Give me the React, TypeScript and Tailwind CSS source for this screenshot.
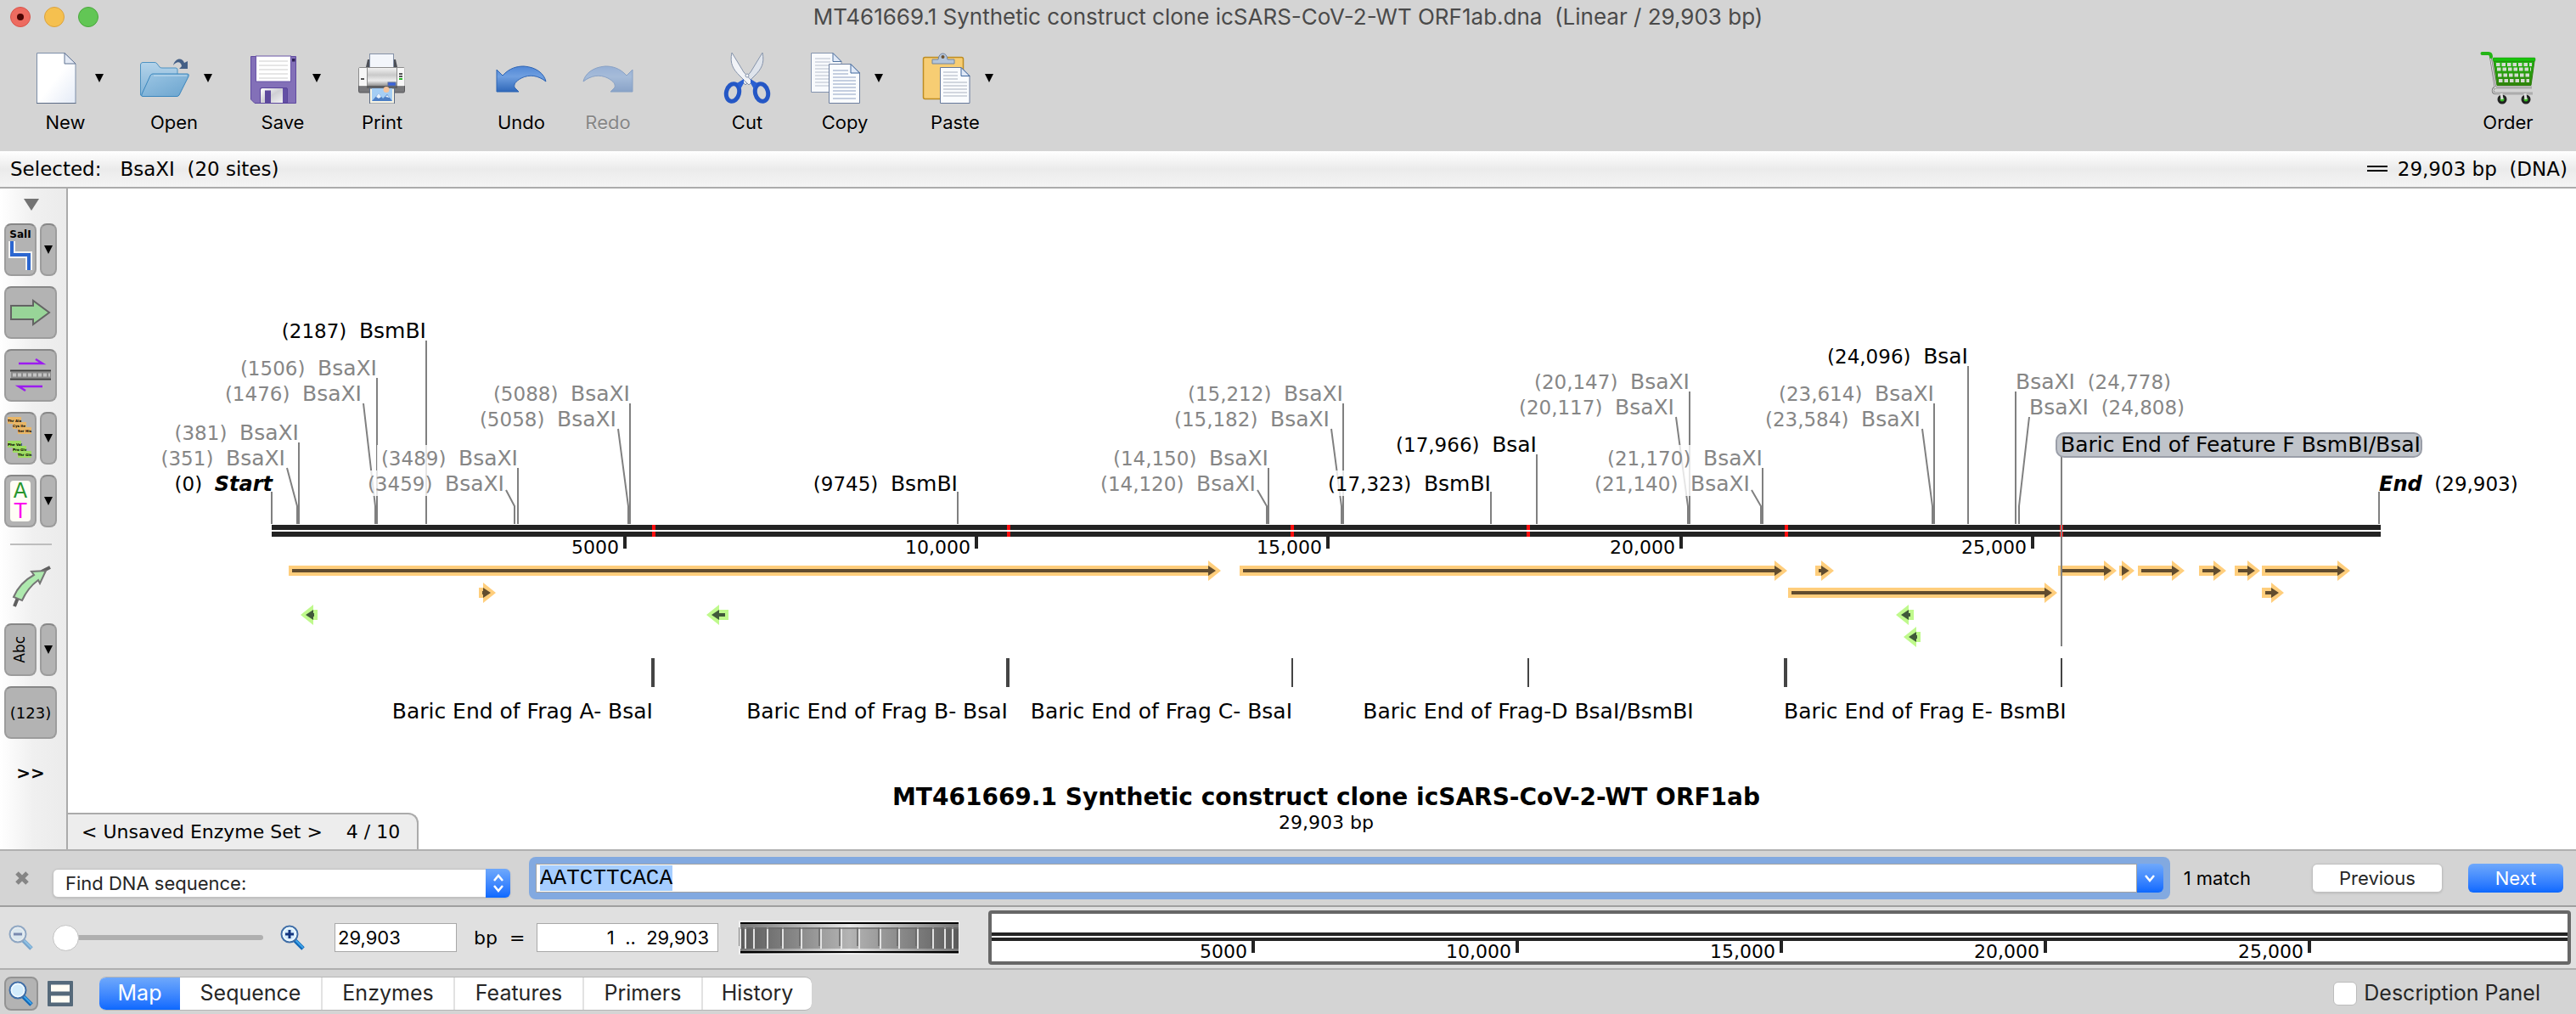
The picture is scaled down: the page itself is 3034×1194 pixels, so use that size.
import React, { useEffect, useRef, useState } from 'react';
import clsx from 'clsx';

type Site = {
  pos: string;
  name: string;
  x: number; // where the leader meets the strand
  y: number; // baseline of the label
  from?: number; // top of a slanted leader
  left?: boolean; // label starts at the leader
  unique?: boolean;
  veil?: number; // width of the veil that keeps the label readable
};

const SITES: Site[] = [
  { pos: '(2187)', name: 'BsmBI', x: 502, y: 398, unique: true },
  { pos: '(1506)', name: 'BsaXI', x: 444, y: 442 },
  { pos: '(1476)', name: 'BsaXI', x: 442, y: 472, from: 428 },
  { pos: '(381)', name: 'BsaXI', x: 352, y: 518 },
  { pos: '(351)', name: 'BsaXI', x: 350, y: 548, from: 338 },
  { pos: '(5088)', name: 'BsaXI', x: 742, y: 472 },
  { pos: '(5058)', name: 'BsaXI', x: 740, y: 502, from: 728 },
  { pos: '(3489)', name: 'BsaXI', x: 610, y: 548, veil: 165 },
  { pos: '(3459)', name: 'BsaXI', x: 606, y: 578, from: 596, veil: 160 },
  { pos: '(9745)', name: 'BsmBI', x: 1128, y: 578, unique: true },
  { pos: '(14,150)', name: 'BsaXI', x: 1494, y: 548 },
  { pos: '(14,120)', name: 'BsaXI', x: 1492, y: 578, from: 1481 },
  { pos: '(15,212)', name: 'BsaXI', x: 1582, y: 472 },
  { pos: '(15,182)', name: 'BsaXI', x: 1580, y: 502, from: 1568 },
  { pos: '(17,966)', name: 'BsaI', x: 1810, y: 532, unique: true },
  { pos: '(17,323)', name: 'BsmBI', x: 1756, y: 578, unique: true, veil: 192 },
  { pos: '(20,147)', name: 'BsaXI', x: 1990, y: 458 },
  { pos: '(20,117)', name: 'BsaXI', x: 1988, y: 488, from: 1974 },
  { pos: '(21,170)', name: 'BsaXI', x: 2076, y: 548, veil: 183 },
  { pos: '(21,140)', name: 'BsaXI', x: 2074, y: 578, from: 2063, veil: 183 },
  { pos: '(24,096)', name: 'BsaI', x: 2318, y: 428, unique: true },
  { pos: '(23,614)', name: 'BsaXI', x: 2278, y: 472 },
  { pos: '(23,584)', name: 'BsaXI', x: 2276, y: 502, from: 2264 },
  { pos: '(24,778)', name: 'BsaXI', x: 2374, y: 458, left: true },
  { pos: '(24,808)', name: 'BsaXI', x: 2378, y: 488, from: 2390, left: true },
];

const FEATURES: { from: number; to: number; y: number; reverse?: boolean }[] = [
  { from: 340, to: 1438, y: 672 },
  { from: 1460, to: 2105, y: 672 },
  { from: 2138, to: 2160, y: 672 },
  { from: 2424, to: 2493, y: 672 },
  { from: 2496, to: 2514, y: 672 },
  { from: 2518, to: 2573, y: 672 },
  { from: 2590, to: 2622, y: 672 },
  { from: 2632, to: 2662, y: 672 },
  { from: 2664, to: 2768, y: 672 },
  { from: 564, to: 584, y: 698 },
  { from: 2106, to: 2423, y: 698 },
  { from: 2664, to: 2690, y: 698 },
  { from: 374, to: 354, y: 724, reverse: true },
  { from: 858, to: 832, y: 724, reverse: true },
  { from: 2254, to: 2233, y: 724, reverse: true },
  { from: 2262, to: 2242, y: 750, reverse: true },
];

const FRAGMENTS = [
  { label: 'Baric End of Frag A- BsaI', x: 769, w: 4, at: 769, anchor: 'end' },
  { label: 'Baric End of Frag B- BsaI', x: 1187, w: 4, at: 1187, anchor: 'end' },
  { label: 'Baric End of Frag C- BsaI', x: 1522, w: 2, at: 1522, anchor: 'end' },
  { label: 'Baric End of Frag-D BsaI/BsmBI', x: 1800, w: 2, at: 1800, anchor: 'middle' },
  { label: 'Baric End of Frag E- BsmBI', x: 2103, w: 4, at: 2101, anchor: 'start' },
] as const;

const TICKS = [
  { label: '5000', x: 736 },
  { label: '10,000', x: 1150 },
  { label: '15,000', x: 1564 },
  { label: '20,000', x: 1980 },
  { label: '25,000', x: 2394 },
];

const TABS = [
  { name: 'Map', width: 'w-[95px]' },
  { name: 'Sequence', width: 'w-[166px]' },
  { name: 'Enzymes', width: 'w-[156px]' },
  { name: 'Features', width: 'w-[152px]' },
  { name: 'Primers', width: 'w-[140px]' },
  { name: 'History', width: 'w-[130px]' },
];

const SANS = "font-['Inter',sans-serif]";
const WIDE = "font-['DejaVu_Sans',sans-serif]";
const BLUE = 'bg-gradient-to-b from-[#6ea8fb] to-[#0a68ff]';

const Caret = () => (
  <svg width="10" height="10" viewBox="0 0 10 10" aria-hidden="true">
    <path d="M0 0H10L5 10Z" fill="#000" />
  </svg>
);

/* ---------- toolbar icons ---------- */

const NewIcon = () => (
  <svg width="60" height="60" viewBox="0 0 60 60">
    <defs>
      <linearGradient id="page" x1="0" y1="0" x2="1" y2="1">
        <stop offset="0.5" stopColor="#fff" />
        <stop offset="1" stopColor="#e4ebf7" />
      </linearGradient>
    </defs>
    <path d="M7.5 .5H40L53 13V59.5H7.5Z" fill="url(#page)" stroke="#7d8ea8" />
    <path d="M7 59.5H53.5" stroke="#5c6c86" />
    <path d="M40 .5V13H53Z" fill="#e3e9f4" stroke="#5f7292" strokeLinejoin="round" />
  </svg>
);

const OpenIcon = () => (
  <svg width="60" height="60" viewBox="0 0 60 60">
    <defs>
      <linearGradient id="back" x1="0" y1="0" x2="0" y2="1">
        <stop offset="0" stopColor="#b4d3ea" />
        <stop offset="1" stopColor="#7fb2d6" />
      </linearGradient>
      <linearGradient id="front" x1="0" y1="0" x2="1" y2="1">
        <stop offset="0" stopColor="#9cc6e4" />
        <stop offset="1" stopColor="#6ba4ce" />
      </linearGradient>
    </defs>
    <path d="M1.500 50V14Q2 11.500 4 11.500H18Q20 11.500 21 13L24 17Q25 18 27 18H43Q45 18 45 20V30L20 51H3Z" fill="url(#back)" stroke="#4d92c2" />
    <path d="M16 25H57Q59 25 58 28L47 50Q46 51.500 44 51.500H4Q2 51.500 3 49L13 27Q14 25 16 25Z" fill="url(#front)" stroke="#3a86bd" />
    <path d="M17 27H56" stroke="#c7e0f1" />
    <path d="M40 15C42 6 51 5 53 12L57 10V19H47L50 16C49 10 44 10 40 15Z" fill="#445f86" />
  </svg>
);

const SaveIcon = () => (
  <svg width="60" height="60" viewBox="0 0 60 60">
    <defs>
      <linearGradient id="metal" x1="0" y1="0" x2="1" y2="1">
        <stop offset="0" stopColor="#fff" />
        <stop offset="0.5" stopColor="#cfcfd4" />
        <stop offset="1" stopColor="#f2f2f4" />
      </linearGradient>
    </defs>
    <path d="M3.500 4.500H56.500V59.500H8L3.500 55Z" fill="#8370b8" stroke="#5f4aa0" />
    <rect x="9.500" y="4" width="41" height="30" fill="#fff" stroke="#6a56a8" />
    <path d="M13 10H47M13 15H47M13 20H47M13 25H47M13 30H47" stroke="#cdcdcd" />
    <rect x="52" y="7" width="3.500" height="3.500" fill="#2d1f55" />
    <path d="M14.500 59V43Q14.500 41.500 16 41.500H45Q46.500 41.500 46.500 43V59Z" fill="#6450a5" stroke="#5a459b" />
    <path d="M15 59V44Q15 42 17 42H41V59Z" fill="url(#metal)" />
    <rect x="20" y="44.500" width="7" height="14.500" fill="#5d499c" />
  </svg>
);

const PrintIcon = () => (
  <svg width="60" height="60" viewBox="0 0 60 60">
    <defs>
      <linearGradient id="body" x1="0" y1="0" x2="0" y2="1">
        <stop offset="0" stopColor="#f4f4f4" />
        <stop offset="0.4" stopColor="#c9c9c9" />
        <stop offset="0.7" stopColor="#ededed" />
        <stop offset="1" stopColor="#8b8b8b" />
      </linearGradient>
    </defs>
    <path d="M11 17L13 8H16V17ZM48 17L46 8H43V17Z" fill="#4c4f56" />
    <rect x="15.500" y="1.500" width="28" height="16" fill="#f3f6fb" stroke="#8592a8" />
    <rect x="2.500" y="36" width="54" height="11" rx="1.500" fill="#77777a" stroke="#57575a" />
    <rect x="2.500" y="17.500" width="54" height="22" rx="1.500" fill="url(#body)" stroke="#8d8d8d" />
    <rect x="3" y="18" width="9" height="21" fill="#f7f7f7" />
    <rect x="48" y="18" width="8.500" height="21" fill="#f7f7f7" />
    <path d="M12.500 18V40M47.500 18V40" stroke="#8f8f8f" />
    <path d="M5 31H9M50 25H54M50 28H54" stroke="#555" strokeWidth="2" />
    <path d="M50 31H54" stroke="#28b728" strokeWidth="2" />
    <rect x="12" y="39" width="36" height="3" fill="#5e5e60" />
    <rect x="37" y="35" width="9" height="4" fill="#3b63dc" stroke="#5b6f9a" />
    <rect x="15.500" y="42" width="29" height="18" fill="#f7f4e4" stroke="#5d6c84" />
    <rect x="18" y="42" width="24" height="15" fill="#a5cef4" />
    <circle cx="35" cy="43.500" r="3.500" fill="#f6c49c" />
    <path d="M18 57L26 48L31 54L36 49L42 57Z" fill="#4d7fc5" />
    <path d="M23 52L26 48L29 52L26 54ZM34 52L36 50L39 53Z" fill="#e9f2fc" />
  </svg>
);

const TurnIcon = ({ flip }: { flip?: boolean }) => (
  <svg width="60" height="60" viewBox="0 0 60 60" className={flip ? '-scale-x-100 opacity-45' : ''}>
    <defs>
      <linearGradient id={flip ? 'redo' : 'undo'} x1="0" y1="0" x2="0" y2="1">
        <stop offset="0" stopColor="#4f86d6" />
        <stop offset="0.4" stopColor="#6f9fe0" />
        <stop offset="1" stopColor="#2f68b9" />
      </linearGradient>
    </defs>
    <path
      d="M1 20L8 27C16 18 25 16 33 16C48 17 57 25 59 34C50 27 40 25 30 30C23 34 21 37 22 41L27 46H1Z"
      fill={flip ? 'url(#redo)' : 'url(#undo)'}
      stroke="#2d64b4"
    />
  </svg>
);

const CutIcon = () => (
  <svg width="60" height="60" viewBox="0 0 60 60">
    <path d="M48 0C51 13 46 20 39 27L28 38L24 34L34 23Z" fill="#dfe4ec" stroke="#8593aa" />
    <path d="M12 0C9 13 14 20 21 27L32 38L36 34L26 23Z" fill="#f1f3f7" stroke="#8593aa" />
    <ellipse cx="13" cy="47" rx="7.500" ry="10.500" fill="none" stroke="#2457c5" strokeWidth="5" transform="rotate(14 13 47)" />
    <ellipse cx="47" cy="47" rx="7.500" ry="10.500" fill="none" stroke="#2457c5" strokeWidth="5" transform="rotate(-14 47 47)" />
    <path d="M18 36L26 31V36L22 43ZM42 36L34 31V36L38 43Z" fill="#2a60d2" />
    <circle cx="30" cy="27" r="2" fill="#fff" stroke="#8593aa" />
  </svg>
);

const CopyIcon = () => (
  <svg width="60" height="60" viewBox="0 0 60 60">
    <path d="M1.500 .5H27L37 10.500V46.500H1.500Z" fill="#f8fafd" stroke="#8494ae" />
    <path d="M27 .5V10.500H37Z" fill="#dfe8f6" stroke="#51739f" />
    <path d="M6 7H24M6 11H24M6 15H32M6 19H32M6 23H32M6 27H32M6 31H32M6 35H32M6 39H32" stroke="#b7bfcd" />
    <path d="M22.500 13.500H48L58.500 24V59.500H22.500Z" fill="#fafcfe" stroke="#6e80a0" />
    <path d="M48 13.500V24H58.500Z" fill="#dfe8f6" stroke="#3e669d" />
    <path d="M27 21H45M27 25H45M27 29H54M27 33H54M27 37H54M27 41H54M27 45H54M27 49H54M27 54H54" stroke="#8ea0c2" />
  </svg>
);

const PasteIcon = () => (
  <svg width="60" height="60" viewBox="0 0 60 60">
    <rect x="3.500" y="5.500" width="47" height="49" rx="2" fill="#f7cd73" stroke="#bd8c22" strokeWidth="1.500" />
    <path d="M14 8H21Q22 1 26.500 1Q31 1 32 8H40V13H14Z" fill="#b4c5da" stroke="#72859f" />
    <circle cx="26.500" cy="5" r="2" fill="#6d5130" />
    <path d="M23.500 17.500H48L58 27.500V59.500H23.500Z" fill="#fafcfe" stroke="#66799b" />
    <path d="M48 17.500V27.500H58Z" fill="#dfe8f6" stroke="#3e669d" />
    <path d="M27 23H44M27 27H44M27 31H44M27 35H55M27 39H55M27 43H55M27 47H55M27 51H55" stroke="#a9b1bf" />
  </svg>
);

const CartIcon = () => (
  <svg width="64" height="60" viewBox="0 0 64 60" className="overflow-visible">
    <defs>
      <linearGradient id="basket" x1="0" y1="0" x2="0" y2="1">
        <stop offset="0" stopColor="#21b512" />
        <stop offset="1" stopColor="#2f8309" />
      </linearGradient>
    </defs>
    <path d="M11 3L17 41H60M18 41Q14 41 14 45Q14 48 18 48H61" fill="none" stroke="#777" strokeWidth="2.500" />
    <path d="M11 3L17 41H60M18 41Q14 41 14 45Q14 48 18 48H61" fill="none" stroke="#e4e4e4" />
    <path d="M1.500 1H9Q12 1 12 5" fill="none" stroke="#24b516" strokeWidth="4" strokeLinecap="round" />
    <path d="M15 10H63L59 38.500H19Z" fill="url(#basket)" stroke="#2d7d10" />
    <rect x="14" y="6" width="50" height="4" rx="1" fill="#16c40a" stroke="#208512" strokeWidth="0.500" />
    <path d="M18 14H60" stroke="#d5dcd2" strokeWidth="4" strokeDasharray="4.500 2" />
    <path d="M19 19.500H59" stroke="#d5dcd2" strokeWidth="4" strokeDasharray="4.500 2" />
    <path d="M20 26.500H58" stroke="#d5dcd2" strokeWidth="4" strokeDasharray="4.500 2" />
    <path d="M21 33H57" stroke="#d5dcd2" strokeWidth="4" strokeDasharray="4.500 2" />
    {[25, 53].map((cx) => (
      <g key={cx}>
        <circle cx={cx} cy="55" r="4" fill="#35b822" stroke="#222" strokeWidth="3" />
        <path d={`M${cx - 1} 48L${cx} 55`} stroke="#ddd" strokeWidth="3" />
      </g>
    ))}
  </svg>
);

const Glass = ({ sign, faded }: { sign?: '+' | '-'; faded?: boolean }) => (
  <svg width="30" height="30" viewBox="0 0 30 30" className={faded ? 'opacity-50' : ''}>
    <path d="M17 18L27 28" stroke="#1168b8" strokeWidth="5" />
    <path d="M18 18L27 27" stroke="#3fa4ea" strokeWidth="2" />
    <circle cx="11" cy="11" r="9.500" fill="#d3ecfc" stroke="#3f6da6" strokeWidth="2" />
    <circle cx="11" cy="11" r="7.500" fill="none" stroke="#f0f9ff" strokeWidth="1.500" />
    {sign && <path d="M6 11H16" stroke="#12357f" strokeWidth="3" />}
    {sign === '+' && <path d="M11 6V16" stroke="#12357f" strokeWidth="3" />}
  </svg>
);

/* ---------- toolbar ---------- */

type ToolProps = { label: string; icon: React.ReactNode; menu?: boolean; disabled?: boolean };

const Tool: React.FC<ToolProps> = ({ label, icon, menu, disabled }) => (
  <button disabled={disabled} className="flex flex-col items-center">
    <span className="flex items-center gap-4">
      {icon}
      {menu && <Caret />}
    </span>
    <span
      className={clsx(
        'mt-2 text-[22px] leading-7 [text-shadow:0_1px_0_#eee]',
        menu && 'pr-1',
        disabled ? 'text-[#868686]' : 'text-black',
      )}
    >
      {label}
    </span>
  </button>
);

const Toolbar = () => (
  <header className={clsx('bg-[#d4d4d4]', SANS)}>
    <div className="relative flex h-10 items-center px-3">
      <div className="flex gap-4">
        <button aria-label="Close" className="flex size-6 items-center justify-center rounded-full border border-[#d9534a] bg-[#ed6b60]">
          <span className="size-2 rounded-full bg-[#4b0503]" />
        </button>
        <button aria-label="Minimize" className="size-6 rounded-full border border-[#dba23d] bg-[#f5c04f]" />
        <button aria-label="Zoom" className="size-6 rounded-full border border-[#4aa73c] bg-[#62c655]" />
      </div>
      <h1 className="absolute inset-x-0 text-center text-[26px] leading-10 whitespace-pre text-[#4a4a4a] pointer-events-none">
        {'MT461669.1 Synthetic construct clone icSARS-CoV-2-WT ORF1ab.dna  (Linear / 29,903 bp)'}
      </h1>
    </div>
    <div className="flex items-start justify-between pt-[22px] pr-12 pb-5 pl-9">
      <div className="flex gap-[104px]">
        <div className="flex gap-[42px]">
          <Tool label="New" icon={<NewIcon />} menu />
          <Tool label="Open" icon={<OpenIcon />} menu />
          <Tool label="Save" icon={<SaveIcon />} menu />
          <Tool label="Print" icon={<PrintIcon />} />
        </div>
        <div className="flex gap-[42px]">
          <Tool label="Undo" icon={<TurnIcon />} />
          <Tool label="Redo" icon={<TurnIcon flip />} disabled />
        </div>
        <div className="flex gap-11">
          <Tool label="Cut" icon={<CutIcon />} />
          <Tool label="Copy" icon={<CopyIcon />} menu />
          <Tool label="Paste" icon={<PasteIcon />} menu />
        </div>
      </div>
      <Tool label="Order" icon={<CartIcon />} />
    </div>
  </header>
);

const StatusLine = () => (
  <div className={clsx('flex h-11 items-center justify-between border-b-2 border-[#ababab] bg-gradient-to-b from-white via-[#ebebeb] to-[#f4f4f4] pr-[10px] pl-3 text-[23px] whitespace-pre text-black', WIDE)}>
    <span>{'Selected:   BsaXI  (20 sites)'}</span>
    <span className="flex items-center gap-3">
      <svg width="24" height="8" viewBox="0 0 24 8" aria-hidden="true">
        <path d="M0 1H24M0 6H24" stroke="#000" strokeWidth="2" />
      </svg>
      {'29,903 bp  (DNA)'}
    </span>
  </div>
);

/* ---------- side bar ---------- */

const PRESSED = 'flex items-center justify-center rounded-lg border-2 border-[#9c9c9c] border-t-[#878787] bg-[#b3b3b3] h-[62px]';

const SideTool = ({ label, menu, children }: { label: string; menu?: boolean; children: React.ReactNode }) => (
  <div className="flex gap-1">
    <button aria-label={label} className={clsx(PRESSED, menu ? 'w-[38px]' : 'w-[62px]')}>
      {children}
    </button>
    {menu && (
      <button aria-label={`${label} options`} className={clsx(PRESSED, 'w-5')}>
        <Caret />
      </button>
    )}
  </div>
);

const CODONS = [
  { text: 'Thr Ala', x: 0, y: 0, fill: '#e9b667' },
  { text: 'Cys Ile', x: 6, y: 6, fill: '#e9b667' },
  { text: 'Ser His', x: 12, y: 12, fill: '#e9b667' },
  { text: 'Phe Val', x: 0, y: 28, fill: '#9edc62' },
  { text: 'Pro Gly', x: 6, y: 34, fill: '#9edc62' },
  { text: 'Thr Gln', x: 12, y: 40, fill: '#9edc62' },
];

const SideBar = () => (
  <aside className={clsx('flex w-20 shrink-0 flex-col gap-3 border-r-2 border-[#ababab] bg-gradient-to-r from-white via-[#f0f0f0] to-[#ebebeb] pt-3 pl-[5px] text-black', WIDE)}>
    <svg width="18" height="14" viewBox="0 0 18 14" className="mb-[3px] ml-[23px]" aria-hidden="true">
      <path d="M0 0H18L9 14Z" fill="#737373" />
    </svg>
    <SideTool label="Show enzymes" menu>
      <svg width="34" height="56" viewBox="0 0 34 56">
        <text x="17" y="14" textAnchor="middle" fontSize="12" fontWeight="700">SalI</text>
        <path d="M7 18V34H27V52" fill="none" stroke="#f2f2f2" strokeWidth="8" />
        <path d="M7 18V34H27V52" fill="none" stroke="#2b66d0" strokeWidth="4" />
      </svg>
    </SideTool>
    <SideTool label="Show features">
      <svg width="48" height="32" viewBox="0 0 48 32">
        <path d="M1 8H27V2L46 16L27 30V24H1Z" fill="#98d598" stroke="#636363" strokeWidth="2" />
      </svg>
    </SideTool>
    <SideTool label="Show primers">
      <svg width="48" height="40" viewBox="0 0 48 40">
        <path d="M10 6H38L30 1" fill="none" stroke="#9c1cf0" strokeWidth="2.500" />
        <path d="M38 33H10L18 38" fill="none" stroke="#9c1cf0" strokeWidth="2.500" />
        <path d="M0 14.500H48M0 24.500H48" stroke="#3c3c3c" strokeWidth="2" />
        <path d="M1 19.500H48" stroke="#8b8b8b" strokeWidth="7" />
        <path d="M3 19.500H47" stroke="#c4c4c4" strokeWidth="4" strokeDasharray="4 2" />
      </svg>
    </SideTool>
    <SideTool label="Show translations" menu>
      <svg width="30" height="50" viewBox="0 0 30 50">
        {CODONS.map((c) => (
          <g key={c.text}>
            <rect x={c.x} y={c.y} width="16" height="8" fill={c.fill} />
            <text x={c.x} y={c.y + 6} fontSize="4" fontWeight="700">{c.text}</text>
          </g>
        ))}
      </svg>
    </SideTool>
    <SideTool label="Show bases" menu>
      <span className="flex h-12 w-6 flex-col items-center justify-center rounded bg-[#fffdf5] text-[24px] leading-6">
        <span className="text-[#27962d]">A</span>
        <span className="text-[#fb00ee]">T</span>
      </span>
    </SideTool>
    <hr className="mt-[7px] ml-[7px] w-[49px] border-t-2 border-[#bdbdbd]" />
    <button aria-label="Draw feature" className="mt-[6px] flex h-[62px] w-[62px] items-center justify-center">
      <svg width="50" height="50" viewBox="0 0 50 50">
        <path d="M6 48L10 38M38 7L48 2" stroke="#5f5f5f" strokeWidth="4" />
        <path d="M5 37C10 25 18 17 29 11L26 7L43 6L36 21L34 17C26 23 19 32 15 41Z" fill="#aee9ae" stroke="#757575" strokeWidth="2" />
      </svg>
    </button>
    <SideTool label="Show names" menu>
      <span className="-rotate-90 text-[17px]">Abc</span>
    </SideTool>
    <SideTool label="Show positions">
      <span className="text-[18px]">(123)</span>
    </SideTool>
    <button className="mt-3 w-[62px] text-[20px] leading-8 font-bold">&gt;&gt;</button>
  </aside>
);

/* ---------- sequence map ---------- */

const Feature = ({ from, to, y, reverse }: (typeof FEATURES)[number]) => {
  const d = reverse ? -1 : 1;
  const neck = to - 15 * d;
  const tip = to - 6 * d;
  const innerNeck = tip - 9 * d;
  const innerFrom = (innerNeck - from) * d > 4 ? from + 4 * d : innerNeck;
  return (
    <g>
      <path
        d={`M${from} ${y - 6}H${neck}V${y - 12}L${to} ${y}L${neck} ${y + 12}V${y + 6}H${from}Z`}
        fill={reverse ? '#bff98c' : '#ffce7c'}
      />
      <path
        d={`M${innerFrom} ${y - 2}H${innerNeck}V${y - 6}L${tip} ${y}L${innerNeck} ${y + 6}V${y + 2}H${innerFrom}Z`}
        fill={reverse ? '#40593a' : '#614c2e'}
      />
    </g>
  );
};

const SequenceMap = () => (
  <svg viewBox="80 222 2954 778" className={clsx('h-full w-full', WIDE)} role="img" aria-label="Sequence map">
    <g fill="none" stroke="#808080" strokeWidth="2">
      {SITES.map((s) => (
        <path key={s.pos} d={`M${s.from ?? s.x} ${s.y === 578 ? (s.from ? 577 : 579) : s.y + 3}L${s.x} 596V617`} />
      ))}
      <path d="M320 579V617M2802 579V617" />
    </g>

    {SITES.filter((s) => s.veil).map((s) => {
      const end = (s.from ?? s.x + 2) - 3;
      return <rect key={s.pos} x={end - s.veil!} y={s.y - 24} width={s.veil} height="30" fill="#fff" opacity="0.8" />;
    })}

    {SITES.map((s) => {
      const edge = s.from ?? s.x;
      return (
        <text
          key={s.pos}
          x={s.left ? edge : s.from ? edge - 2 : edge}
          y={s.y}
          textAnchor={s.left ? 'start' : 'end'}
          fill={s.unique ? '#000' : '#868686'}
          className="whitespace-pre text-[23px]"
        >
          {s.left ? (
            <><tspan className="text-[25px]">{s.name}</tspan>{'  '}{s.pos}</>
          ) : (
            <>{s.pos}{'  '}<tspan className="text-[25px]">{s.name}</tspan></>
          )}
        </text>
      );
    })}
    <text x="321" y="578" textAnchor="end" className="whitespace-pre text-[23px]">
      {'(0)  '}<tspan className="text-[24px] font-bold italic">Start</tspan>
    </text>
    <text x="2802" y="578" className="whitespace-pre text-[23px]">
      <tspan className="text-[24px] font-bold italic">End</tspan>{'  (29,903)'}
    </text>

    {/* both strands, with the fragment junctions in red */}
    <path d="M320 621H2804M320 629H2804" stroke="#232323" strokeWidth="6" />
    {[770, 1188, 1522, 1800, 2104, 2428].map((x) => (
      <path key={x} d={`M${x} 618V624M${x} 626V632`} stroke="#ff0d0d" strokeWidth="4" />
    ))}
    {TICKS.map((t) => (
      <g key={t.label}>
        <path d={`M${t.x} 632V646`} stroke="#232323" strokeWidth="4" />
        <text x={t.x - 7} y="652" textAnchor="end" className="text-[22px]">{t.label}</text>
      </g>
    ))}

    {FEATURES.map((f) => (
      <Feature key={`${f.from}-${f.y}`} {...f} />
    ))}

    <path d="M2428 538V761" stroke="#808080" strokeWidth="2" />
    <rect x="2422" y="510" width="430" height="28" rx="9" fill="#c0c4ca" stroke="#9a9ea8" strokeWidth="2" />
    <text x="2427" y="532" className="text-[25px]">Baric End of Feature F BsmBI/BsaI</text>

    {FRAGMENTS.map((f) => (
      <g key={f.label}>
        <path d={`M${f.x} 775V809`} stroke="#444" strokeWidth={f.w} />
        <text x={f.at} y="846" textAnchor={f.anchor} className="text-[25px]">{f.label}</text>
      </g>
    ))}
    <path d="M2428 775V809" stroke="#444" strokeWidth="2" />

    <text x="1562" y="948" textAnchor="middle" className="text-[28px] font-bold">
      MT461669.1 Synthetic construct clone icSARS-CoV-2-WT ORF1ab
    </text>
    <text x="1562" y="976" textAnchor="middle" className="text-[22px]">29,903 bp</text>
  </svg>
);

/* ---------- find bar ---------- */

const FindBar = () => {
  const [query, setQuery] = useState('AATCTTCACA');
  const input = useRef<HTMLInputElement>(null);

  useEffect(() => {
    input.current?.focus();
    input.current?.select();
  }, []);

  return (
    <div className={clsx('flex h-[66px] items-center border-t-2 border-[#b0b0b0] bg-[#d4d4d4] pr-[15px] pl-[18px] text-[22px] text-black', SANS)}>
      <button aria-label="Close find bar" className="mr-7">
        <svg width="16" height="16" viewBox="0 0 16 16">
          <path d="M2 2L14 14M14 2L2 14" stroke="#858585" strokeWidth="5" />
        </svg>
      </button>
      <div className="relative mt-3 w-[539px] shrink-0">
        <select aria-label="Search type" className="block h-[34px] w-full appearance-none rounded-md border border-[#c2c2c2] bg-white pl-[14px] leading-7 text-[#262626] shadow-sm">
          <option>Find DNA sequence:</option>
        </select>
        <span className={clsx('pointer-events-none absolute inset-y-0 right-0 flex w-[29px] items-center justify-center rounded-r-md', BLUE)}>
          <svg width="14" height="22" viewBox="0 0 14 22">
            <path d="M2 8L7 2L12 8M2 14L7 20L12 14" fill="none" stroke="#fff" strokeWidth="2.500" />
          </svg>
        </span>
      </div>
      <div className="ml-[22px] flex min-w-0 flex-1 rounded-lg bg-[#82a9e0] p-2">
        <input
          ref={input}
          aria-label="Sequence to find"
          value={query}
          onChange={(e) => setQuery(e.target.value)}
          className="h-[34px] min-w-0 flex-1 border border-[#a3a3a3] bg-white pl-1 font-['Liberation_Mono',monospace] text-[26px] leading-7 outline-none selection:bg-[#a5cdff] selection:text-black"
        />
        <button aria-label="Recent searches" className={clsx('flex w-[31px] items-center justify-center rounded-r-md', BLUE)}>
          <svg width="14" height="10" viewBox="0 0 14 10">
            <path d="M2 2L7 8L12 2" fill="none" stroke="#fff" strokeWidth="2.500" />
          </svg>
        </button>
      </div>
      <span className="mr-[72px] ml-4">1 match</span>
      <button className="h-[34px] w-[154px] rounded-md border border-[#c0c0c0] bg-white leading-7 text-[#262626] shadow-sm">Previous</button>
      <button className={clsx('ml-[30px] h-[34px] w-28 rounded-md leading-7 text-white', BLUE)}>Next</button>
    </div>
  );
};

/* ---------- zoom bar ---------- */

const RIBS = [2, 8, 18, 34, 52, 74, 97, 121, 142, 167, 189, 211, 229, 243, 252];

const Wheel = () => (
  <svg width="260" height="40" viewBox="0 0 260 40" aria-hidden="true">
    <defs>
      <linearGradient id="wheel" x1="0" y1="0" x2="1" y2="0">
        <stop offset="0" stopColor="#5a5a5a" />
        <stop offset="0.5" stopColor="#b4b4b4" />
        <stop offset="1" stopColor="#5a5a5a" />
      </linearGradient>
      <linearGradient id="rim" x1="0" y1="0" x2="1" y2="0">
        <stop offset="0" stopColor="#777" />
        <stop offset="0.5" stopColor="#e8e8e8" />
        <stop offset="1" stopColor="#777" />
      </linearGradient>
    </defs>
    <rect y="0" width="260" height="40" fill="#f0f0f0" />
    <rect x="2" y="2" width="257" height="37" fill="url(#rim)" />
    <rect x="2" y="8" width="257" height="25" fill="url(#wheel)" />
    {RIBS.map((x) => (
      <g key={x}>
        <path d={`M${x} 8V33`} stroke="#e2e2e2" strokeWidth="2" />
        <path d={`M${x - 2} 8V30`} stroke="#666" strokeWidth="1.500" />
      </g>
    ))}
    <path d="M2 9H259" stroke="#6d6d6d" strokeWidth="1.500" />
    <path d="M2 3H259M2 37H259" stroke="#000" strokeWidth="2" />
  </svg>
);

const ZoomBar = () => {
  const [zoom, setZoom] = useState(0);

  return (
    <div className={clsx('flex h-[74px] items-center border-t-2 border-[#9f9f9f] bg-[#e0e0e0] pr-[6px] pl-[10px] text-[22px] text-black', SANS)}>
      <button aria-label="Zoom out" disabled><Glass sign="-" faded /></button>
      <input
        type="range"
        aria-label="Zoom"
        value={zoom}
        onChange={(e) => setZoom(Number(e.target.value))}
        className="mr-5 ml-[22px] h-8 w-[248px] appearance-none bg-transparent [&::-webkit-slider-runnable-track]:h-[6px] [&::-webkit-slider-runnable-track]:rounded-full [&::-webkit-slider-runnable-track]:bg-[#afafaf] [&::-webkit-slider-thumb]:-mt-3 [&::-webkit-slider-thumb]:size-[31px] [&::-webkit-slider-thumb]:appearance-none [&::-webkit-slider-thumb]:rounded-full [&::-webkit-slider-thumb]:border [&::-webkit-slider-thumb]:border-[#c3c3c3] [&::-webkit-slider-thumb]:bg-white"
      />
      <button aria-label="Zoom in"><Glass sign="+" /></button>
      <input aria-label="Visible length" defaultValue="29,903" className="ml-[34px] h-[34px] w-36 border border-[#a8a8a8] bg-white px-[3px]" />
      <span className={clsx('ml-5 w-[74px] whitespace-pre', WIDE)}>{'bp  ='}</span>
      <input aria-label="Visible range" defaultValue="1  ..  29,903" className="h-[34px] w-[214px] border border-[#a8a8a8] bg-white px-[10px] text-right" />
      <div className="mx-6 shrink-0"><Wheel /></div>
      <div className="ml-[10px] min-w-0 flex-1 rounded-sm border-4 border-[#676767] bg-white">
        <svg viewBox="1168 1076 1856 56" className={clsx('h-[56px] w-full', WIDE)} role="img" aria-label="Overview">
          <path d="M1168 1100H3024M1168 1106H3024" stroke="#232323" strokeWidth="4" />
          {TICKS.map((t, i) => (
            <g key={t.label}>
              <path d={`M${1476 + i * 311} 1108V1122`} stroke="#232323" strokeWidth="4" />
              <text x={1469 + i * 311} y="1128" textAnchor="end" className="text-[22px]">{t.label}</text>
            </g>
          ))}
        </svg>
      </div>
    </div>
  );
};

/* ---------- view tabs ---------- */

const ViewBar = () => {
  const [view, setView] = useState('Map');

  return (
    <footer className={clsx('flex h-[54px] items-center border-t-2 border-[#b0b0b0] bg-[#d4d4d4] pt-1 pr-[42px] pl-[5px] text-[25px] text-[#262626]', SANS)}>
      <button aria-label="Find" className="flex size-10 items-center justify-center rounded-lg border-2 border-[#939393] bg-[#b3b3b3]">
        <Glass />
      </button>
      <button aria-label="Split view" className="mr-[31px] ml-[11px]">
        <svg width="30" height="30" viewBox="0 0 30 30">
          <rect width="30" height="30" rx="1" fill="#55697a" />
          <path d="M4 8.500H26M4 21.500H26" stroke="#fffdf5" strokeWidth="8" />
        </svg>
      </button>
      <div role="tablist" className="flex h-10 overflow-hidden rounded-lg border-y border-[#b5b5b5] bg-white">
        {TABS.map((tab, i) => (
          <button
            key={tab.name}
            role="tab"
            aria-selected={view === tab.name}
            onClick={() => setView(tab.name)}
            className={clsx(tab.width, i > 1 && 'border-l-2 border-[#e2e2e2]', view === tab.name && clsx('text-white', BLUE))}
          >
            {tab.name}
          </button>
        ))}
      </div>
      <label className="ml-auto flex items-center gap-2">
        <input type="checkbox" className="size-7 appearance-none rounded-md border border-[#bcbcbc] bg-white checked:bg-[#0a68ff]" />
        Description Panel
      </label>
    </footer>
  );
};

export default function App() {
  return (
    <div className="flex min-h-screen flex-col bg-[#d4d4d4]">
      <Toolbar />
      <StatusLine />
      <main className="flex flex-1 bg-white">
        <SideBar />
        <section className="relative min-w-0 flex-1">
          <SequenceMap />
          <button className={clsx('absolute bottom-0 left-0 h-[43px] rounded-tr-xl border-t-2 border-r-2 border-[#ababab] bg-[#ededed] pr-5 pl-4 text-[22px] whitespace-pre text-black', WIDE)}>
            {'< Unsaved Enzyme Set >    4 / 10'}
          </button>
        </section>
      </main>
      <FindBar />
      <ZoomBar />
      <ViewBar />
    </div>
  );
}
